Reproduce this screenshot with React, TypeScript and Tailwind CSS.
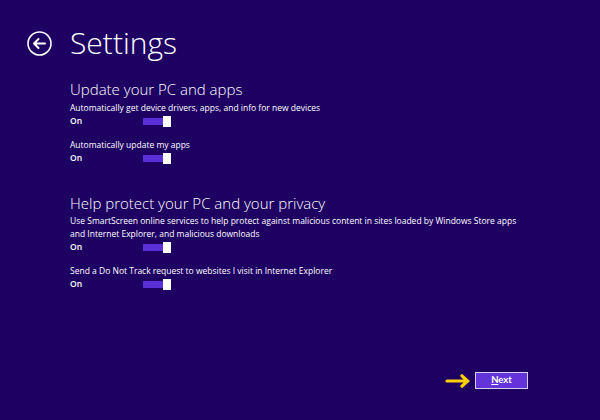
import React from "react"

const bodyFont = { fontFamily: '"Open Sans", "Liberation Sans", sans-serif' }

function Toggle() {
  return (
    <div className="flex items-center">
      <div className="h-[7px] w-[20px] bg-[#5b2fd8]" />
      <div className="h-[11px] w-[8px] bg-white" />
    </div>
  )
}

function Setting({ lines }: { lines: string[] }) {
  return (
    <div className="flex flex-col">
      {lines.map((l) => (
        <p key={l} className="text-[8.5px] leading-[13px] text-white">{l}</p>
      ))}
      <div className="mt-[2px] flex h-[11px] items-center">
        <span className="w-[73px] text-[8.5px] font-semibold text-white">On</span>
        <Toggle />
      </div>
    </div>
  )
}

export default function App() {
  return (
    <main className="relative h-[420px] w-[600px] overflow-hidden bg-[#1e0063] text-white" style={bodyFont}>
      {/* Header */}
      <div className="flex items-center pl-[27px] pt-[24px]">
        <svg width="25" height="25" viewBox="0 0 25 25" fill="none" stroke="white" strokeWidth="1.6">
          <circle cx="12.5" cy="12.5" r="11.5" />
          <path d="M7 12.5h11M11.5 8l-4.5 4.5 4.5 4.5" strokeWidth="2" strokeLinecap="round" strokeLinejoin="round" />
        </svg>
        <h1 className="ml-[18px] text-[30px] font-light leading-[38px]">Settings</h1>
      </div>

      <div className="pl-[70px]">
        <section className="mt-[17px]">
          <h2 className="text-[15px] font-light leading-[20px]">Update your PC and apps</h2>
          <div className="mt-[2px] flex flex-col gap-[11px]">
            <Setting lines={["Automatically get device drivers, apps, and info for new devices"]} />
            <Setting lines={["Automatically update my apps"]} />
          </div>
        </section>

        <section className="mt-[29px]">
          <h2 className="text-[15px] font-light leading-[20px]">Help protect your PC and your privacy</h2>
          <div className="mt-[1px] flex flex-col gap-[11px]">
            <Setting
              lines={[
                "Use SmartScreen online services to help protect against malicious content in sites loaded by Windows Store apps",
                "and Internet Explorer, and malicious downloads",
              ]}
            />
            <Setting lines={["Send a Do Not Track request to websites I visit in Internet Explorer"]} />
          </div>
        </section>
      </div>

      {/* Footer action */}
      <div className="absolute left-[445px] top-[372px] flex items-center gap-[3px]">
        <svg width="27" height="14" viewBox="0 0 27 14" fill="none" stroke="#ffd000" strokeWidth="3.2" strokeLinecap="round" strokeLinejoin="round">
          <path d="M2 7h21M17 1.8l5.5 5.2-5.5 5.2" />
        </svg>
        <button className="flex h-[17px] w-[53px] items-center justify-center border border-[#d8d0f0] bg-[#6234d9] text-[9.5px] font-bold text-white" style={{ fontFamily: '"Lato", "Liberation Sans", sans-serif' }}>
          <span><span className="underline">N</span>ext</span>
        </button>
      </div>
    </main>
  )
}
